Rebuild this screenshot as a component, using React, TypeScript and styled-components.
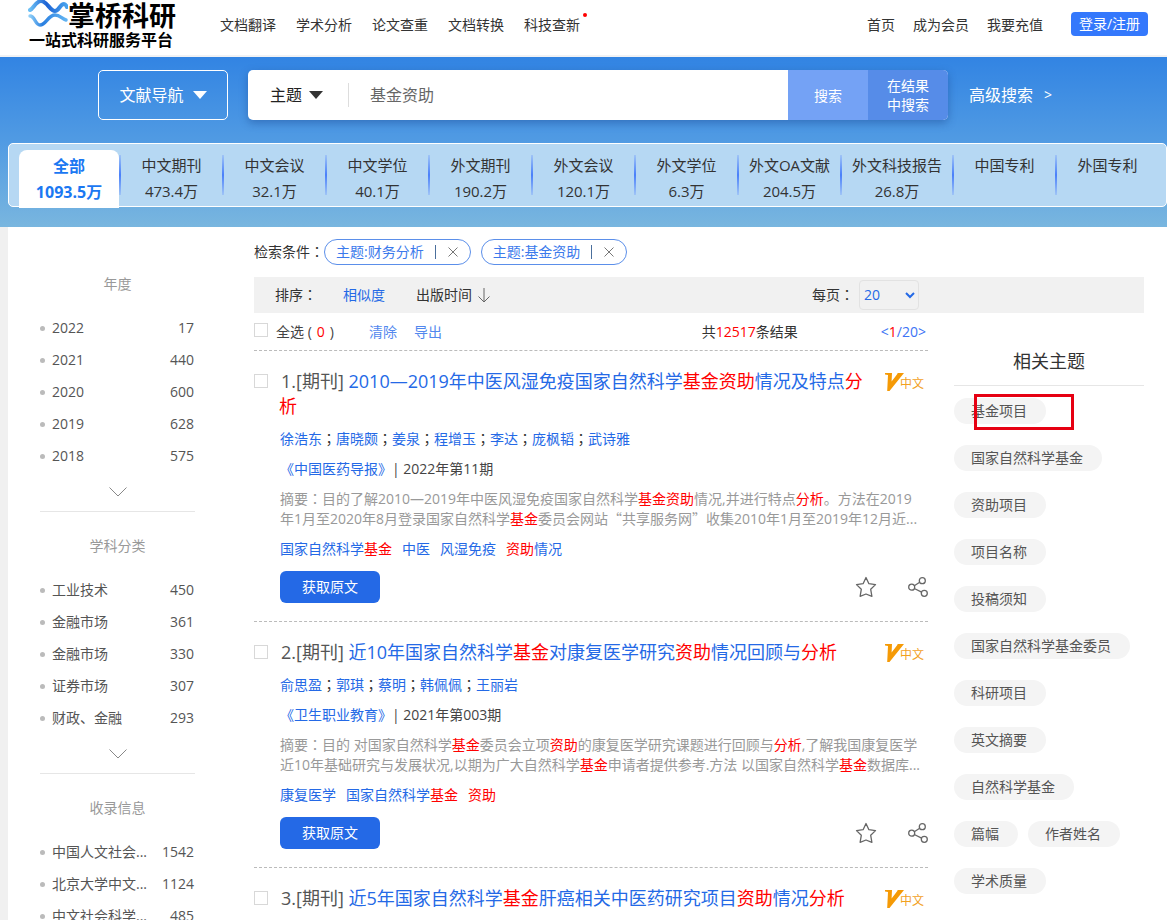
import React from 'react';
import styled, { createGlobalStyle } from 'styled-components';

const blue = '#2469e6';

const GlobalStyle = createGlobalStyle`
  * { box-sizing: border-box; }
  body {
    margin: 0;
    background: #f0f0f0;
    color: #333;
    font-family: "Open Sans", "Noto Sans CJK SC", sans-serif;
    font-size: 14px;
    line-height: 20px;
  }
  button, input, select { font: inherit; color: inherit; margin: 0; }
  a { color: inherit; text-decoration: none; }
  ul, h1, h2, p { margin: 0; padding: 0; list-style: none; font-weight: inherit; }
`;

const Page = styled.div`
  height: 100vh;
  min-width: 960px;
  overflow: hidden;
`;

/* header */
const Header = styled.header`
  display: flex;
  align-items: flex-start;
  height: 57px;
  padding: 0 19px 0 25px;
  background: #fff;
  border-bottom: 2px solid #f1f2f4;
`;
const Logo = styled.a`
  display: block;
  width: 155px;
  color: #000;
  font-weight: 700;
  white-space: nowrap;
`;
const LogoTop = styled.span`
  display: flex;
  font-size: 27px;
  line-height: 31px;
`;
const Slogan = styled.span`
  display: block;
  padding-left: 4px;
  font-size: 16px;
  line-height: 18px;
`;
const Nav = styled.nav<{ $gap: number }>`
  display: flex;
  gap: ${(p) => p.$gap}px;
  padding-top: 15px;
`;
const MainNav = styled(Nav)`
  margin: 0 auto 0 40px;
`;
const NavLink = styled.a<{ $dot?: boolean }>`
  position: relative;
  &::after {
    content: "";
    display: ${(p) => (p.$dot ? 'block' : 'none')};
    position: absolute;
    top: -2px;
    right: -7px;
    width: 4px;
    height: 4px;
    border-radius: 50%;
    background: #f00;
  }
`;
const Login = styled.button`
  width: 77px;
  height: 24px;
  margin: 12px 0 0 28px;
  padding: 0;
  border: 0;
  border-radius: 4px;
  background: #3478fc;
  color: #fff;
  line-height: 24px;
`;

/* hero */
const Hero = styled.section`
  height: 170px;
  padding-top: 13px;
  overflow: hidden;
  background: linear-gradient(#3284e3, #519be3 50%, #79b6df);
`;
const SearchRow = styled.form`
  display: flex;
  align-items: center;
  padding: 0 98px;
  color: #fff;
  font-size: 16px;
`;
const GuideButton = styled.button`
  display: flex;
  align-items: center;
  justify-content: center;
  gap: 9px;
  width: 130px;
  height: 50px;
  margin-right: 20px;
  border: 1px solid #fff;
  border-radius: 5px;
  background: none;
`;
const SearchBox = styled.div`
  display: flex;
  flex: 1;
  max-width: 700px;
  height: 50px;
  overflow: hidden;
  border-radius: 5px;
  background: #fff;
  box-shadow: 0 3px 8px rgba(20, 60, 130, 0.4);
`;
const FieldButton = styled.button`
  display: flex;
  align-items: center;
  gap: 7px;
  height: 24px;
  margin: 13px 0;
  padding: 0 25px 0 22px;
  border: 0;
  border-right: 1px solid #ddd;
  background: none;
  color: #222;
`;
const Query = styled.input`
  flex: 1;
  min-width: 0;
  padding: 0 21px;
  border: 0;
  outline: 0;
  background: none;
  color: #666;
`;
const SearchButton = styled.button<{ $bg: string }>`
  width: 80px;
  padding: 0 17px;
  border: 0;
  background: ${(p) => p.$bg};
  color: #fff;
  font-size: 14px;
  line-height: 19px;
`;
const Advanced = styled.a`
  display: flex;
  gap: 11px;
  margin-left: 21px;
  white-space: nowrap;
`;
const Small = styled.span`
  font-size: 14px;
`;
const Tabs = styled.nav`
  display: flex;
  height: 64px;
  margin: 23px 0 0 8px;
  padding: 6px 7px 0 10px;
  border: 1px solid #fff;
  border-radius: 5px;
  background: #b6d8f3;
`;
const Tab = styled.a<{ $active?: boolean; $wide?: boolean }>`
  position: relative;
  flex: ${(p) => (p.$wide ? 112 : 103)} 1 0;
  height: 58px;
  padding-top: 2px;
  text-align: center;
  font-size: 15px;
  line-height: 26px;
  white-space: nowrap;
  ${(p) =>
    p.$active &&
    `
    margin-right: 1px;
    padding-top: 3px;
    flex-grow: 100;
    border-radius: 8px 8px 0 0;
    background: #fff;
    color: #1b78f2;
    font-size: 16px;
    font-weight: 700;
  `}
  &:not(:last-child)::after {
    content: "";
    position: absolute;
    top: 5px;
    right: ${(p) => (p.$active ? -2 : -1)}px;
    width: 2px;
    height: 40px;
    background: linear-gradient(#9fc4f6, #4a80fa 50%, #9fc4f6);
  }
`;
const TabLine = styled.span`
  display: block;
`;

/* body */
const Body = styled.main`
  display: flex;
  margin-left: 8px;
  padding: 0 23px 0 32px;
  background: #fff;
`;
const Sidebar = styled.aside`
  flex: none;
  width: 155px;
  padding-top: 23px;
  color: #555;
`;
const Facet = styled.section`
  padding-top: 24px;
  border-bottom: 1px solid #e6e6e6;
`;
const FacetTitle = styled.h2`
  margin-bottom: 18px;
  color: #999;
  font-size: 14px;
  text-align: center;
`;
const FacetItem = styled.li`
  display: flex;
  align-items: center;
  height: 32px;
  padding-right: 1px;
  &::before {
    content: "";
    width: 5px;
    height: 5px;
    margin-right: 7px;
    border-radius: 50%;
    background: #bbb;
  }
`;
const FacetCount = styled.span`
  margin-left: auto;
`;
const MoreButton = styled.button`
  display: flex;
  align-items: center;
  justify-content: center;
  width: 100%;
  height: 39px;
  padding: 0;
  border: 0;
  background: none;
`;
const Content = styled.div`
  flex: 1;
  min-width: 0;
  margin-left: 59px;
`;
const Conditions = styled.div`
  display: flex;
  align-items: center;
  gap: 10px;
  height: 50px;
`;
const ConditionLabel = styled.span`
  margin-right: -10px;
`;
const Pill = styled.span`
  display: flex;
  align-items: center;
  height: 26px;
  padding: 0 12px 0 11px;
  border: 1px solid #5b8fea;
  border-radius: 13px;
  color: #3b7aec;
`;
const PillBar = styled.span`
  width: 1px;
  height: 14px;
  margin: 0 12px 0 11px;
  background: #4a6f9c;
`;
const IconButton = styled.button`
  display: flex;
  padding: 0;
  border: 0;
  background: none;
`;
const SortBar = styled.div`
  display: flex;
  align-items: center;
  height: 36px;
  padding: 0 225px 0 21px;
  background: #f1f1f1;
`;
const SortLink = styled.a<{ $active?: boolean }>`
  display: flex;
  align-items: center;
  gap: 5px;
  margin-left: ${(p) => (p.$active ? 26 : 31)}px;
  color: ${(p) => (p.$active ? blue : '#333')};
`;
const PerPage = styled.label`
  display: flex;
  align-items: center;
  gap: 5px;
  margin-left: auto;
`;
const SelectWrap = styled.span`
  display: grid;
  align-items: center;
  > * { grid-area: 1 / 1; }
  > svg { justify-self: end; margin-right: 4px; pointer-events: none; }
`;
const Select = styled.select`
  appearance: none;
  width: 60px;
  height: 30px;
  padding: 0 4px;
  border: 1px solid #e2e2e2;
  border-radius: 4px;
  background: none;
  color: ${blue};
`;
const Columns = styled.div`
  display: flex;
  gap: 26px;
`;
const Results = styled.div`
  flex: 1;
  min-width: 0;
`;
const Summary = styled.div`
  display: flex;
  gap: 83px;
  height: 38px;
  padding: 9px 2px 0 0;
  border-bottom: 1px dashed #bbb;
`;
const SelectAll = styled.label`
  display: flex;
  margin-right: 18px;
`;
const Actions = styled.div`
  display: flex;
  gap: 17px;
  margin-right: auto;
  color: #5288ee;
`;
const Check = styled.input`
  appearance: none;
  flex: none;
  width: 14px;
  height: 14px;
  margin: 1px 8px 0 0;
  border: 1px solid #d8d8d8;
  background: #fff;
`;
const Pager = styled.span`
  color: #3d74f5;
`;
const Hit = styled.em`
  color: #f00;
  font-style: normal;
`;
const Zero = styled(Hit)`
  padding: 0 5px;
`;
const Result = styled.article`
  display: flex;
  padding: 18px 0;
  border-bottom: 1px dashed #bbb;
`;
const ResultCheck = styled(Check)`
  margin: 5px 11px 0 0;
`;
const ResultBody = styled.div`
  flex: 1;
  min-width: 0;
`;
const TitleRow = styled.div`
  display: flex;
  align-items: flex-start;
  justify-content: space-between;
  padding-right: 4px;
  margin-bottom: 5px;
`;
const Title = styled.h2`
  max-width: 592px;
  color: ${blue};
  font-size: 18px;
  line-height: 25px;
  text-indent: 2px;
`;
const Kind = styled.span`
  color: #555;
`;
const Badge = styled.span`
  display: flex;
  align-items: center;
  height: 25px;
  color: #f2a11e;
  font-size: 12px;
`;
const BadgeText = styled.span`
  margin-left: -4px;
  padding-top: 4px;
`;
const Meta = styled.p`
  padding-left: 1px;
  color: ${blue};
  line-height: 30px;
`;
const Dark = styled.span`
  color: #444;
`;
const Punct = styled.span`
  font-family: "Noto Sans CJK TC", sans-serif;
  color: #333;
  line-height: 1;
`;
const Quote = styled.span`
  font-family: "Noto Sans CJK SC", sans-serif;
  line-height: 1;
`;
const Abstract = styled.p`
  margin: 5px 0;
  padding: 0 6px 0 1px;
  color: #999;
  ${Punct} { color: inherit; }
`;
const Keywords = styled.p`
  display: flex;
  gap: 10px;
  padding-left: 1px;
  color: ${blue};
  line-height: 30px;
`;
const Footer = styled.div`
  display: flex;
  align-items: center;
  gap: 31px;
  margin-top: 7px;
  padding-left: 1px;
`;
const GetButton = styled.button`
  width: 100px;
  height: 32px;
  margin-right: auto;
  border: 0;
  border-radius: 6px;
  background: ${blue};
  color: #fff;
`;
const Related = styled.aside`
  position: relative;
  flex: none;
  width: 190px;
  color: #555;
`;
const RelatedTitle = styled.h2`
  height: 73px;
  margin-bottom: 12px;
  padding-top: 35px;
  border-bottom: 1px solid #e6e6e6;
  color: #333;
  font-size: 18px;
  line-height: 26px;
  text-align: center;
`;
const TagList = styled.div`
  display: flex;
  flex-wrap: wrap;
  gap: 21px 10px;
`;
const Tag = styled.a`
  height: 26px;
  padding: 0 19px 0 17px;
  border-radius: 13px;
  background: #f4f4f4;
  line-height: 26px;
`;
const Highlight = styled.div`
  position: absolute;
  top: 81px;
  left: 20px;
  width: 100px;
  height: 36px;
  border: 3px solid #e60012;
`;

const Triangle = ({ color }: { color: string }) => (
  <svg width="14" height="8" viewBox="0 0 14 8" aria-hidden="true">
    <path d="M0 0h14L7 8z" fill={color} />
  </svg>
);

const Waves = () => (
  <svg width="43" height="28" viewBox="0 0 43 28" fill="none" strokeLinecap="round" aria-hidden="true">
    <defs>
      <linearGradient id="waveA" x1="0" x2="1" y1="0" y2="0">
        <stop offset="0" stopColor="#6cc0f5" />
        <stop offset=".45" stopColor="#1c62d4" />
        <stop offset="1" stopColor="#49a4ee" />
      </linearGradient>
      <linearGradient id="waveB" x1="0" x2="1" y1="0" y2="0">
        <stop offset="0" stopColor="#8ccdf7" />
        <stop offset=".35" stopColor="#2a7fe0" />
        <stop offset="1" stopColor="#62b4f2" />
      </linearGradient>
    </defs>
    <path d="M5 10C8 9 11 1 16 1c6 0 9 10 14 10 4 0 5-7 9-7 1 0 2 1 3 3" stroke="url(#waveA)" strokeWidth="4" />
    <path d="M5 16c5 0 5 9 10 9 6 0 8-10 15-10 5 0 7 4 11 5" stroke="url(#waveB)" strokeWidth="3.4" />
  </svg>
);

const Chevron = () => (
  <svg width="18" height="10" viewBox="0 0 18 10" fill="none" stroke="#888" aria-hidden="true">
    <path d="M.5 .5 9 9 17.5 .5" />
  </svg>
);

const Cross = () => (
  <svg width="10" height="10" viewBox="0 0 10 10" stroke="#777" aria-hidden="true">
    <path d="M.5 .5l9 9M9.500 .5l-9 9" />
  </svg>
);

const Star = () => (
  <svg width="22" height="22" viewBox="0 0 22 22" fill="none" stroke="#666" strokeWidth="1.3" strokeLinejoin="round" aria-hidden="true">
    <path d="M11 1.500 13.900 7.700 20.500 8.600 15.700 13.300 16.900 20.300 11 18 5.100 20.300 6.300 13.300 1.500 8.600 8.100 7.700z" />
  </svg>
);

const Share = () => (
  <svg width="20" height="20" viewBox="0 0 20 20" fill="none" stroke="#666" strokeWidth="1.3" aria-hidden="true">
    <circle cx="3.700" cy="10.200" r="3" />
    <circle cx="14.300" cy="3.700" r="3" />
    <circle cx="16.300" cy="16.300" r="3" />
    <path d="M6.300 8.700l5.400-3.400M6.300 11.500l7.300 3.600" />
  </svg>
);

const VMark = () => (
  <svg width="19" height="18" viewBox="0 0 19 18" aria-hidden="true">
    <path d="M0 0h7l-.4 8.500L12.500 .8V0H19L4.500 18H2.200L3 2 0 1.500z" fill="#f59a06" />
  </svg>
);

const tabs: [string, string][] = [
  ['全部', '1093.5万'], ['中文期刊', '473.4万'], ['中文会议', '32.1万'], ['中文学位', '40.1万'],
  ['外文期刊', '190.2万'], ['外文会议', '120.1万'], ['外文学位', '6.3万'], ['外文OA文献', '204.5万'],
  ['外文科技报告', '26.8万'], ['中国专利', ''], ['外国专利', ''],
];

const facets: { title: string; items: [string, number][] }[] = [
  { title: '年度', items: [['2022', 17], ['2021', 440], ['2020', 600], ['2019', 628], ['2018', 575]] },
  { title: '学科分类', items: [['工业技术', 450], ['金融市场', 361], ['金融市场', 330], ['证券市场', 307], ['财政、金融', 293]] },
  { title: '收录信息', items: [['中国人文社会...', 1542], ['北京大学中文...', 1124], ['中文社会科学...', 485]] },
];

/* text between asterisks is a search hit */
const results = [
  {
    title: '2010—2019年中医风湿免疫国家自然科学*基金资助*情况及特点*分析*',
    authors: ['徐浩东', '唐晓颇', '姜泉', '程增玉', '李达', '庞枫韬', '武诗雅'],
    journal: '《中国医药导报》',
    issue: '2022年第11期',
    abstract: '目的了解2010—2019年中医风湿免疫国家自然科学*基金资助*情况,并进行特点*分析*。方法在2019年1月至2020年8月登录国家自然科学*基金*委员会网站“共享服务网”收集2010年1月至2019年12月近...',
    keywords: ['国家自然科学*基金*', '中医', '风湿免疫', '*资助*情况'],
  },
  {
    title: '近10年国家自然科学*基金*对康复医学研究*资助*情况回顾与*分析*',
    authors: ['俞思盈', '郭琪', '蔡明', '韩佩佩', '王丽岩'],
    journal: '《卫生职业教育》',
    issue: '2021年第003期',
    abstract: '目的 对国家自然科学*基金*委员会立项*资助*的康复医学研究课题进行回顾与*分析*,了解我国康复医学近10年基础研究与发展状况,以期为广大自然科学*基金*申请者提供参考.方法 以国家自然科学*基金*数据库...',
    keywords: ['康复医学', '国家自然科学*基金*', '*资助*'],
  },
  { title: '近5年国家自然科学*基金*肝癌相关中医药研究项目*资助*情况*分析*' },
];

const related = [
  '基金项目', '国家自然科学基金', '资助项目', '项目名称', '投稿须知', '国家自然科学基金委员',
  '科研项目', '英文摘要', '自然科学基金', '篇幅', '作者姓名', '学术质量',
];

/* curly quotes take the full-width forms of the Chinese face */
const Quoted = ({ text }: { text: string }) => (
  <>{text.split(/([“”])/).map((part, i) => (i % 2 ? <Quote key={i}>{part}</Quote> : part))}</>
);

const Marked = ({ text }: { text: string }) => (
  <>
    {text.split('*').map((part, i) => (i % 2 ? <Hit key={i}>{part}</Hit> : <Quoted key={i} text={part} />))}
  </>
);

export default function App() {
  return (
    <Page>
      <GlobalStyle />
      <Header>
        <Logo href="#">
          <LogoTop><Waves />掌桥科研</LogoTop>
          <Slogan>一站式科研服务平台</Slogan>
        </Logo>
        <MainNav $gap={20}>
          {['文档翻译', '学术分析', '论文查重', '文档转换', '科技查新'].map((t) => (
            <NavLink href="#" key={t} $dot={t === '科技查新'}>{t}</NavLink>
          ))}
        </MainNav>
        <Nav $gap={18}>
          {['首页', '成为会员', '我要充值'].map((t) => <NavLink href="#" key={t}>{t}</NavLink>)}
        </Nav>
        <Login type="button">登录/注册</Login>
      </Header>

      <Hero>
        <SearchRow onSubmit={(e) => e.preventDefault()}>
          <GuideButton type="button">文献导航<Triangle color="#fff" /></GuideButton>
          <SearchBox>
            <FieldButton type="button">主题<Triangle color="#333" /></FieldButton>
            <Query aria-label="检索词" defaultValue="基金资助" />
            <SearchButton $bg="#74a2f5">搜索</SearchButton>
            <SearchButton $bg="#568ce8" type="button">在结果中搜索</SearchButton>
          </SearchBox>
          <Advanced href="#">高级搜索<Small>&gt;</Small></Advanced>
        </SearchRow>
        <Tabs>
          {tabs.map(([name, count], i) => (
            <Tab href="#" key={name} $active={i === 0} $wide={name === '外文科技报告'}>
              <TabLine>{name}</TabLine>
              <TabLine>{count}</TabLine>
            </Tab>
          ))}
        </Tabs>
      </Hero>

      <Body>
        <Sidebar>
          {facets.map((f) => (
            <Facet key={f.title}>
              <FacetTitle>{f.title}</FacetTitle>
              <ul>
                {f.items.map(([name, n], i) => (
                  <FacetItem key={i}><a href="#">{name}</a><FacetCount>{n}</FacetCount></FacetItem>
                ))}
              </ul>
              <MoreButton type="button" aria-label="更多"><Chevron /></MoreButton>
            </Facet>
          ))}
        </Sidebar>

        <Content>
          <Conditions>
            <ConditionLabel>检索条件<Punct>：</Punct></ConditionLabel>
            {['财务分析', '基金资助'].map((t) => (
              <Pill key={t}>
                主题:{t}<PillBar />
                <IconButton type="button" aria-label="移除"><Cross /></IconButton>
              </Pill>
            ))}
          </Conditions>
          <SortBar>
            <span>排序<Punct>：</Punct></span>
            <SortLink href="#" $active>相似度</SortLink>
            <SortLink href="#">
              出版时间
              <svg width="14" height="15" viewBox="0 0 14 15" fill="none" stroke="#666" aria-hidden="true">
                <path d="M7 0v14M1.500 8.500 7 14l5.500-5.500" />
              </svg>
            </SortLink>
            <PerPage>
              <span>每页<Punct>：</Punct></span>
              <SelectWrap>
                <Select defaultValue="20"><option>20</option></Select>
                <svg width="10" height="7" viewBox="0 0 10 7" fill="none" stroke={blue} strokeWidth="2" aria-hidden="true">
                  <path d="M1 1l4 4 4-4" />
                </svg>
              </SelectWrap>
            </PerPage>
          </SortBar>

          <Columns>
            <Results>
              <Summary>
                <Actions>
                  <SelectAll>
                    <Check type="checkbox" />
                    <Dark>全选 (<Zero>0</Zero>)</Dark>
                  </SelectAll>
                  <a href="#">清除</a>
                  <a href="#">导出</a>
                </Actions>
                <span>共<Hit>12517</Hit>条结果</span>
                <Pager>&lt;<Hit>1</Hit>/20&gt;</Pager>
              </Summary>
              {results.map((r, i) => (
                <Result key={i}>
                  <ResultCheck type="checkbox" aria-label={`选择第${i + 1}条`} />
                  <ResultBody>
                    <TitleRow>
                      <Title><Kind>{i + 1}.[期刊]</Kind> <a href="#"><Marked text={r.title} /></a></Title>
                      <Badge><VMark /><BadgeText>中文</BadgeText></Badge>
                    </TitleRow>
                    {r.authors && (
                      <>
                        <Meta>
                          {r.authors.map((a, n) => (
                            <React.Fragment key={a}>{n > 0 && <Punct>；</Punct>}<a href="#">{a}</a></React.Fragment>
                          ))}
                        </Meta>
                        <Meta><a href="#">{r.journal}</a><Dark>| {r.issue}</Dark></Meta>
                        <Abstract>摘要<Punct>：</Punct><Marked text={r.abstract} /></Abstract>
                        <Keywords>
                          {r.keywords.map((k) => <a href="#" key={k}><Marked text={k} /></a>)}
                        </Keywords>
                        <Footer>
                          <GetButton type="button">获取原文</GetButton>
                          <IconButton type="button" aria-label="收藏"><Star /></IconButton>
                          <IconButton type="button" aria-label="分享"><Share /></IconButton>
                        </Footer>
                      </>
                    )}
                  </ResultBody>
                </Result>
              ))}
            </Results>
            <Related>
              <RelatedTitle>相关主题</RelatedTitle>
              <TagList>
                {related.map((t) => <Tag href="#" key={t}>{t}</Tag>)}
              </TagList>
              <Highlight />
            </Related>
          </Columns>
        </Content>
      </Body>
    </Page>
  );
}
